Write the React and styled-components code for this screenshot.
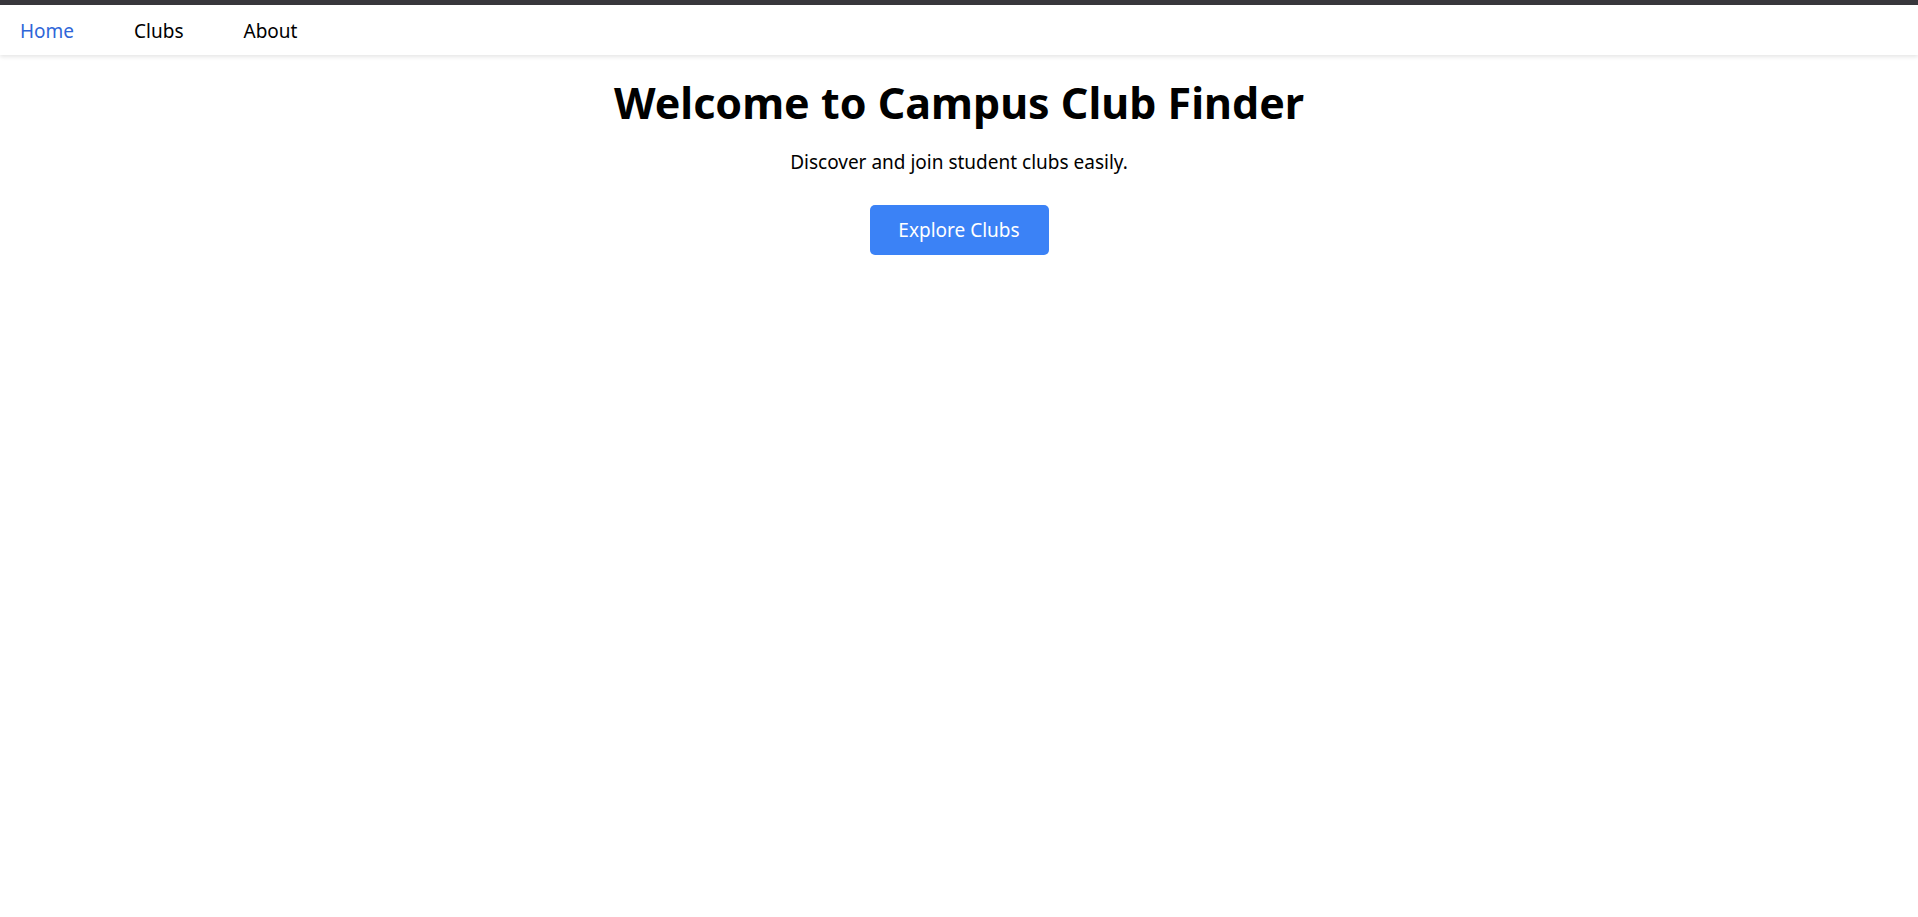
import React from "react";
import styled, { createGlobalStyle } from "styled-components";

const GlobalStyle = createGlobalStyle`
  html, body {
    margin: 0;
    padding: 0;
    background: #ffffff;
    font-family: "Noto Sans", "Open Sans", sans-serif;
    color: #000000;
  }
`;

const TopStrip = styled.div`
  height: 5px;
  background: #38373c;
`;

const Nav = styled.nav`
  height: 50px;
  display: flex;
  align-items: center;
  gap: 60px;
  padding: 1px 20px 0;
  box-sizing: border-box;
  background: #ffffff;
  box-shadow: 0 2px 4px rgba(0, 0, 0, 0.1);
`;

const NavLink = styled.a`
  font-size: 19px;
  text-decoration: none;
  cursor: pointer;
  color: ${(p) => (p.$active ? "#2f66d8" : "#000000")};
`;

const Hero = styled.section`
  display: flex;
  flex-direction: column;
  align-items: center;
  text-align: center;
  padding-top: 20px;
`;

const Title = styled.h1`
  margin: 0;
  font-size: 43px;
  font-weight: 700;
  line-height: 1.3;
`;

const Subtitle = styled.p`
  margin: 18px 0 0;
  font-size: 19px;
`;

const Button = styled.button`
  margin-top: 30px;
  width: 179px;
  height: 50px;
  border: none;
  border-radius: 5px;
  background: #3b82f6;
  color: #ffffff;
  font-family: inherit;
  font-size: 19px;
  cursor: pointer;
`;

export default function App() {
  const links = ["Home", "Clubs", "About"];
  return (
    <>
      <GlobalStyle />
      <TopStrip />
      <Nav>
        {links.map((l, i) => (
          <NavLink key={l} $active={i === 0}>
            {l}
          </NavLink>
        ))}
      </Nav>
      <Hero>
        <Title>Welcome to Campus Club Finder</Title>
        <Subtitle>Discover and join student clubs easily.</Subtitle>
        <Button>Explore Clubs</Button>
      </Hero>
    </>
  );
}
